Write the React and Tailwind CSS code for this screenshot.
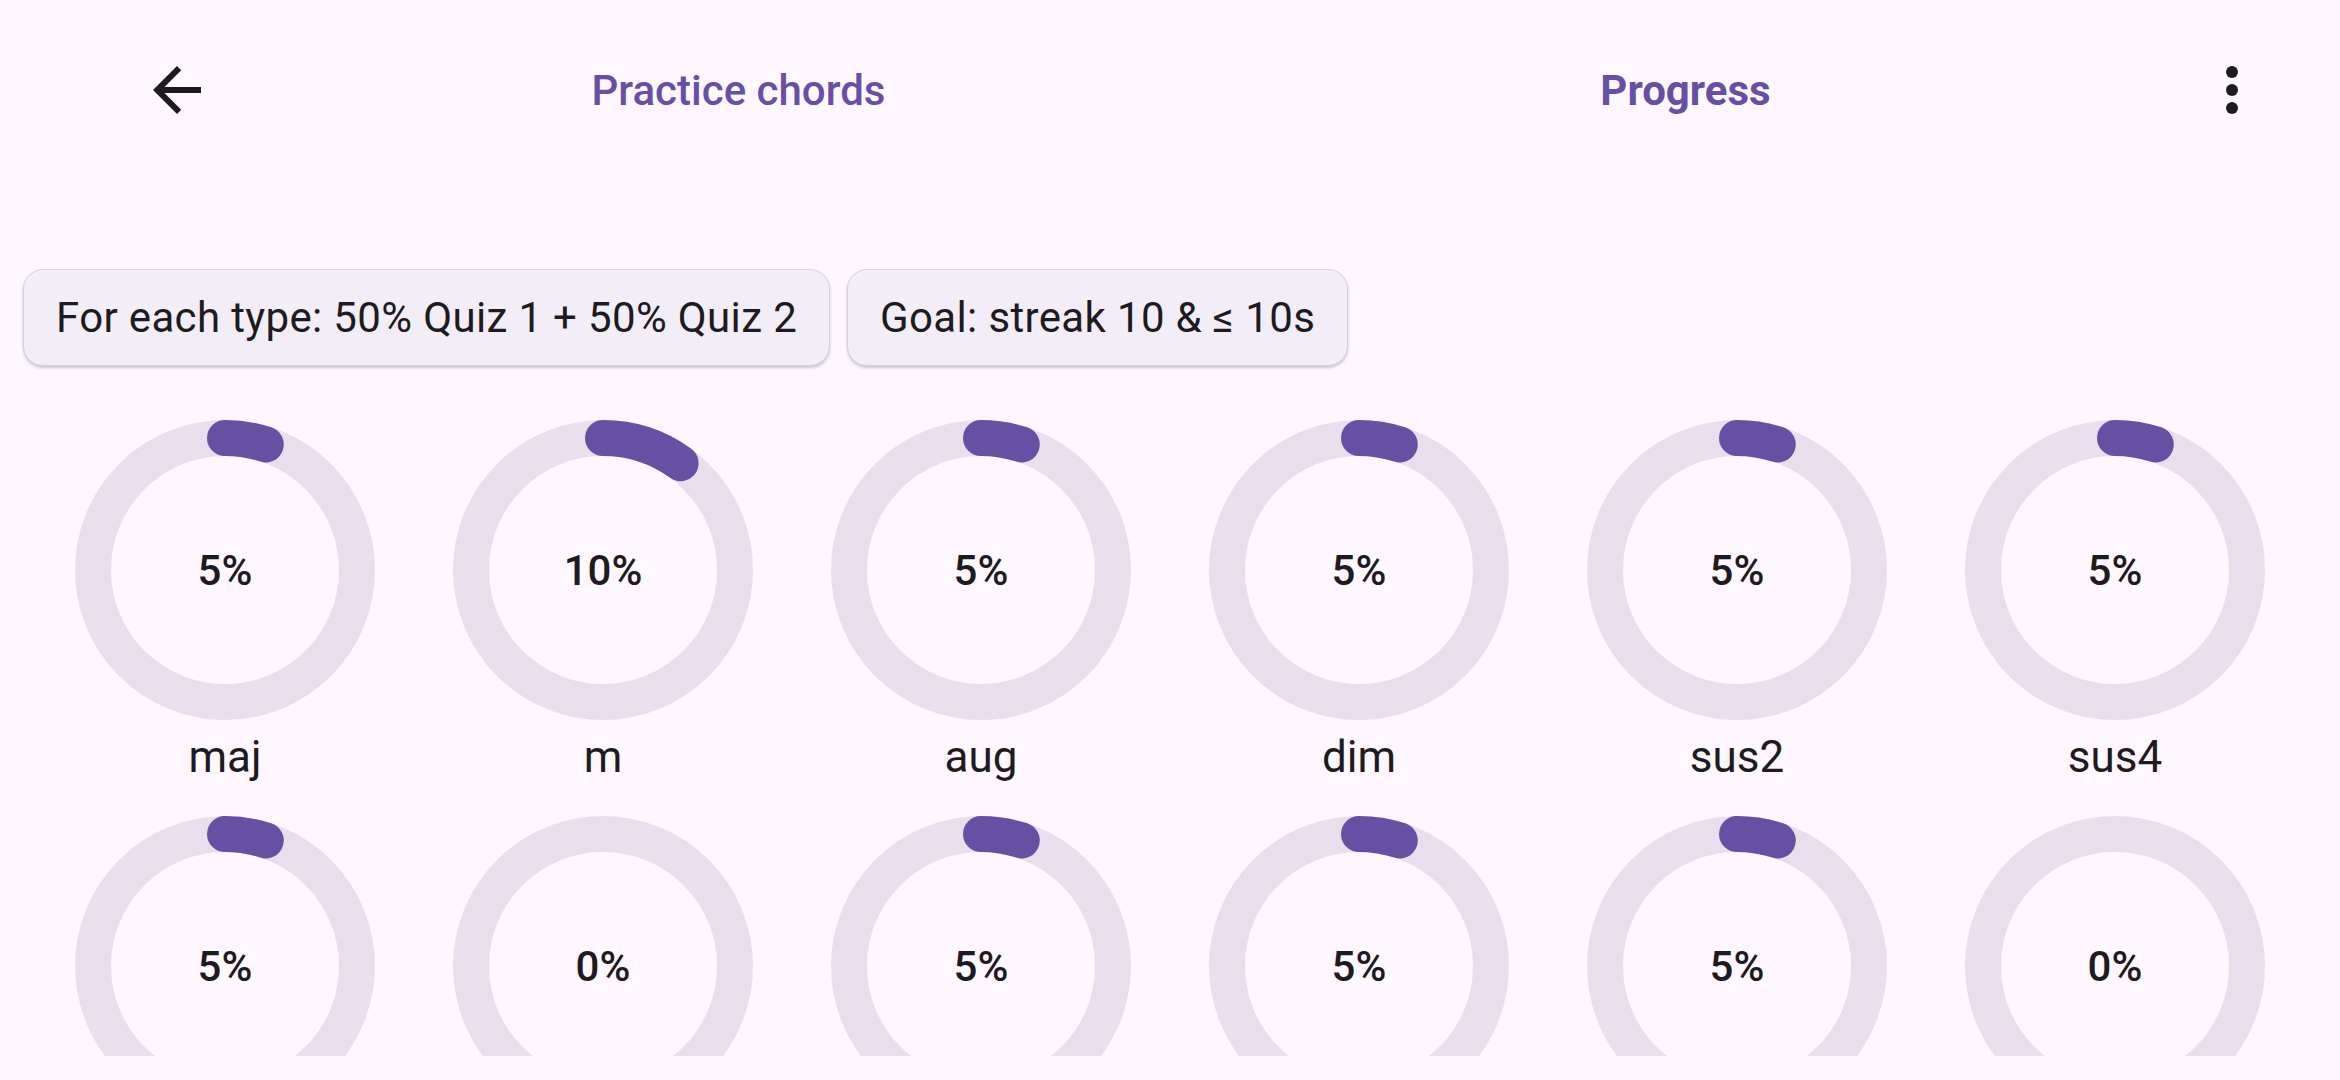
const CHIPS = ['For each type: 50% Quiz 1 + 50% Quiz 2', 'Goal: streak 10 & ≤ 10s'];

const CHORDS = [
  { name: 'maj', pct: 5 },
  { name: 'm', pct: 10 },
  { name: 'aug', pct: 5 },
  { name: 'dim', pct: 5 },
  { name: 'sus2', pct: 5 },
  { name: 'sus4', pct: 5 },
  { name: '7', pct: 5 },
  { name: 'maj7', pct: 0 },
  { name: 'm7', pct: 5 },
  { name: 'm7b5', pct: 5 },
  { name: 'dim7', pct: 5 },
  { name: 'mMaj7', pct: 0 },
];

const R = 132;
const C = 2 * Math.PI * R;

function Ring({ pct }) {
  return (
    <svg width="300" height="300" viewBox="0 0 300 300" className="block">
      <circle cx="150" cy="150" r={R} fill="none" stroke="#E7E0EC" strokeWidth="36" />
      {pct > 0 && (
        <circle
          cx="150" cy="150" r={R} fill="none" stroke="#6750A4" strokeWidth="36"
          strokeLinecap="round"
          strokeDasharray={`${(pct / 100) * C} ${C}`}
          transform="rotate(-90 150 150)"
        />
      )}
    </svg>
  );
}

function BackIcon() {
  return (
    <svg width="72" height="72" viewBox="0 0 24 24" fill="#1D1B20">
      <path d="M20 11H7.83l5.59-5.59L12 4l-8 8 8 8 1.41-1.41L7.83 13H20v-2z" />
    </svg>
  );
}

function MoreIcon() {
  return (
    <svg width="72" height="72" viewBox="0 0 24 24" fill="#1D1B20">
      <circle cx="12" cy="6" r="2" />
      <circle cx="12" cy="12" r="2" />
      <circle cx="12" cy="18" r="2" />
    </svg>
  );
}

export default function App() {
  return (
    <div className="h-[1080px] w-full overflow-hidden bg-[#FEF7FF] text-[#1D1B20] font-['Roboto',sans-serif] flex flex-col">
      {/* top bar */}
      <div className="h-[180px] shrink-0 flex items-center pl-[111px] pr-[42px]">
        <div className="w-[132px] h-[132px] flex items-center justify-center">
          <BackIcon />
        </div>
        <div className="flex-1 ml-[22px] flex items-center">
          <div className="flex-1 text-center text-[42px] font-medium text-[#6750A4]">Practice chords</div>
          <div className="flex-1 text-center text-[42px] font-bold text-[#6750A4]">Progress</div>
        </div>
        <div className="w-[132px] h-[132px] ml-[7px] flex items-center justify-center">
          <MoreIcon />
        </div>
      </div>

      {/* content */}
      <div className="h-[876px] shrink-0 overflow-hidden">
        <div className="flex gap-[17px] pl-[23px] mt-[89px]">
          {CHIPS.map(c => (
            <div key={c}
              className="h-[97px] px-[32px] flex items-center rounded-[20px] bg-[#F3EDF7] border border-[#D6D0DA] shadow-[0_2px_3px_rgba(0,0,0,0.2)] text-[42px] tracking-[0.35px] leading-none whitespace-nowrap">
              {c}
            </div>
          ))}
        </div>

        <div className="grid grid-cols-6 px-[36px] mt-[54px] gap-y-[34px]">
          {CHORDS.map(ch => (
            <div key={ch.name} className="flex flex-col items-center">
              <div className="relative w-[300px] h-[300px]">
                <Ring pct={ch.pct} />
                <div className="absolute inset-0 flex items-center justify-center text-[42px] font-medium">
                  {ch.pct}%
                </div>
              </div>
              <div className="mt-[12px] h-[50px] leading-[50px] text-[44px]">{ch.name}</div>
            </div>
          ))}
        </div>
      </div>
    </div>
  );
}
